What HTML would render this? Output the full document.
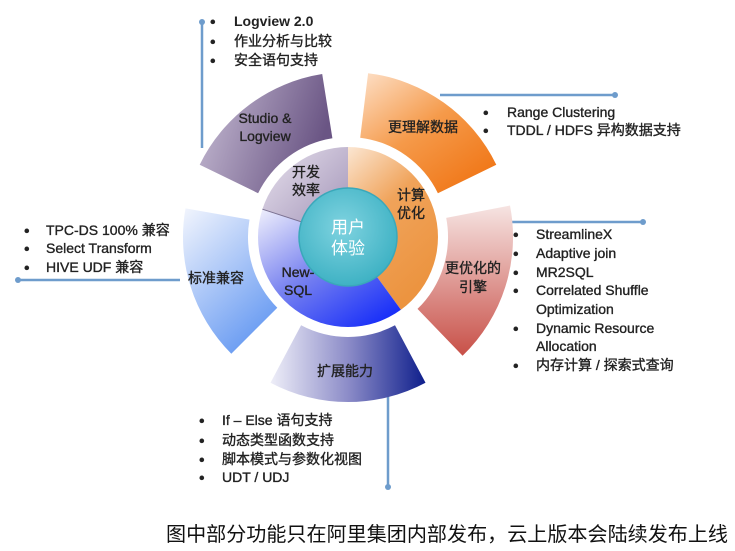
<!DOCTYPE html>
<html><head><meta charset="utf-8"><style>
html,body{margin:0;padding:0;background:#fff;width:735px;height:551px;overflow:hidden}
svg text{font-family:"Liberation Sans","Noto Sans CJK SC",sans-serif;fill:#222}
.t text{stroke:#222;stroke-width:0.35px}
</style></head><body>
<svg width="735" height="551" viewBox="0 0 735 551" xmlns="http://www.w3.org/2000/svg">
<defs>
<linearGradient id="gStudio" x1="0" y1="0" x2="1" y2="0.3"><stop offset="0" stop-color="#c9bfd6"/><stop offset="1" stop-color="#6a5584"/></linearGradient>
<linearGradient id="gOrange" x1="0" y1="0" x2="0.8" y2="1"><stop offset="0" stop-color="#fde0c8"/><stop offset="0.5" stop-color="#f59a4a"/><stop offset="1" stop-color="#f07515"/></linearGradient>
<linearGradient id="gRed" x1="0" y1="0" x2="0" y2="1"><stop offset="0" stop-color="#f6e4e2"/><stop offset="1" stop-color="#c85048"/></linearGradient>
<linearGradient id="gBot" x1="0" y1="0" x2="1" y2="0"><stop offset="0" stop-color="#eeeef8"/><stop offset="0.5" stop-color="#8c8cc8"/><stop offset="1" stop-color="#0f1f8c"/></linearGradient>
<linearGradient id="gLeft" x1="0" y1="0" x2="0.6" y2="1"><stop offset="0" stop-color="#f2f5fd"/><stop offset="1" stop-color="#6a9cf2"/></linearGradient>
<linearGradient id="gDev" x1="0" y1="0" x2="1" y2="1"><stop offset="0" stop-color="#e8e2ee"/><stop offset="1" stop-color="#9e8fb4"/></linearGradient>
<linearGradient id="gCalc" x1="0" y1="0" x2="0.5" y2="1"><stop offset="0" stop-color="#fbe6d2"/><stop offset="0.45" stop-color="#f0a35a"/><stop offset="1" stop-color="#ec9440"/></linearGradient>
<linearGradient id="gSql" x1="0" y1="0" x2="0.8" y2="1"><stop offset="0" stop-color="#f0f0fc"/><stop offset="0.5" stop-color="#7a84f0"/><stop offset="1" stop-color="#1a30f8"/></linearGradient>
<radialGradient id="gCore" cx="0.45" cy="0.4" r="0.6"><stop offset="0" stop-color="#7fd3e0"/><stop offset="1" stop-color="#3fb2c4"/></radialGradient>
</defs>

<g stroke="#6e9ccc" stroke-width="2.5" fill="none">
<line x1="202" y1="22" x2="202" y2="148"/>
<line x1="440" y1="95" x2="615" y2="95"/>
<line x1="512" y1="222" x2="643" y2="222"/>
<line x1="18" y1="280" x2="180" y2="280"/>
<line x1="388" y1="372" x2="388" y2="487"/>
</g>
<g fill="#6e9ccc">
<circle cx="202" cy="22" r="3"/><circle cx="615" cy="95" r="3"/><circle cx="643" cy="222" r="3"/><circle cx="18" cy="280" r="3"/><circle cx="388" cy="487" r="3"/>
</g>

<path d="M199.7,164.7 A165,165 0 0 1 322.2,74 L332.4,138.2 A100,100 0 0 0 258.1,193.2 Z" fill="url(#gStudio)"/>
<path d="M368.1,73.2 A165,165 0 0 1 496.3,164.7 L437.9,193.2 A100,100 0 0 0 360.2,137.7 Z" fill="url(#gOrange)"/>
<path d="M510,205.5 A165,165 0 0 1 462.6,355.7 L417.5,308.9 A100,100 0 0 0 446.2,217.9 Z" fill="url(#gRed)"/>
<path d="M425.5,382.7 A165,165 0 0 1 270.5,382.7 L301.1,325.3 A100,100 0 0 0 395,325.3 Z" fill="url(#gBot)"/>
<path d="M231.3,353.7 A165,165 0 0 1 185.5,208.4 L249.5,219.6 A100,100 0 0 0 277.3,307.7 Z" fill="url(#gLeft)"/>

<circle cx="348" cy="237" r="92" fill="#fff"/>
<path d="M348,237 L262.4,209.2 A90,90 0 0 1 348,147 Z" fill="url(#gDev)"/>
<path d="M348,237 L348,147 A90,90 0 0 1 400.9,309.8 Z" fill="url(#gCalc)"/>
<path d="M348,237 L400.9,309.8 A90,90 0 0 1 262.4,209.2 Z" fill="url(#gSql)"/>
<line x1="348" y1="237" x2="262.4" y2="209.2" stroke="#7a7090" stroke-width="1"/>
<circle cx="348" cy="237" r="49" fill="url(#gCore)" stroke="#3aa8ba" stroke-width="1.5"/>

<g font-size="14" text-anchor="middle" class="t">
<text x="265" y="123">Studio &amp;</text>
<text x="265" y="141">Logview</text>
<text x="423" y="132">更理解数据</text>
<text x="306" y="177">开发</text>
<text x="306" y="195">效率</text>
<text x="411" y="200">计算</text>
<text x="411" y="218">优化</text>
<text x="298" y="277">New-</text>
<text x="298" y="295">SQL</text>
<text x="473" y="273">更优化的</text>
<text x="473" y="292">引擎</text>
<text x="345" y="376">扩展能力</text>
<text x="216" y="283">标准兼容</text>
</g>
<g font-size="17" text-anchor="middle">
<text x="348" y="233" style="fill:#fff">用户</text>
<text x="348" y="254" style="fill:#fff">体验</text>
</g>

<g font-size="14" class="t">
<text x="210" y="27" font-size="16">•</text><text x="234" y="26" font-weight="bold" style="stroke-width:0">Logview 2.0</text>
<text x="210" y="47" font-size="16">•</text><text x="234" y="46">作业分析与比较</text>
<text x="210" y="66" font-size="16">•</text><text x="234" y="65">安全语句支持</text>

<text x="483" y="118" font-size="16">•</text><text x="507" y="117">Range Clustering</text>
<text x="483" y="136" font-size="16">•</text><text x="507" y="135">TDDL / HDFS 异构数据支持</text>

<text x="513" y="240" font-size="16">•</text><text x="536" y="239">StreamlineX</text>
<text x="513" y="259" font-size="16">•</text><text x="536" y="258">Adaptive join</text>
<text x="513" y="278" font-size="16">•</text><text x="536" y="277">MR2SQL</text>
<text x="513" y="296" font-size="16">•</text><text x="536" y="295">Correlated Shuffle</text>
<text x="536" y="314">Optimization</text>
<text x="513" y="334" font-size="16">•</text><text x="536" y="333">Dynamic Resource</text>
<text x="536" y="351">Allocation</text>
<text x="513" y="371" font-size="16">•</text><text x="536" y="370">内存计算 / 探索式查询</text>

<text x="24" y="236" font-size="16">•</text><text x="46" y="235">TPC-DS 100% 兼容</text>
<text x="24" y="254" font-size="16">•</text><text x="46" y="253">Select Transform</text>
<text x="24" y="273" font-size="16">•</text><text x="46" y="272">HIVE UDF 兼容</text>

<text x="199" y="426" font-size="16">•</text><text x="222" y="425">If – Else 语句支持</text>
<text x="199" y="446" font-size="16">•</text><text x="222" y="445">动态类型函数支持</text>
<text x="199" y="465" font-size="16">•</text><text x="222" y="464">脚本模式与参数化视图</text>
<text x="199" y="483" font-size="16">•</text><text x="222" y="482">UDT / UDJ</text>
</g>

<text x="166" y="541" font-size="20" textLength="562" lengthAdjust="spacingAndGlyphs" style="fill:#111">图中部分功能只在阿里集团内部发布，云上版本会陆续发布上线</text>
</svg>
</body></html>
